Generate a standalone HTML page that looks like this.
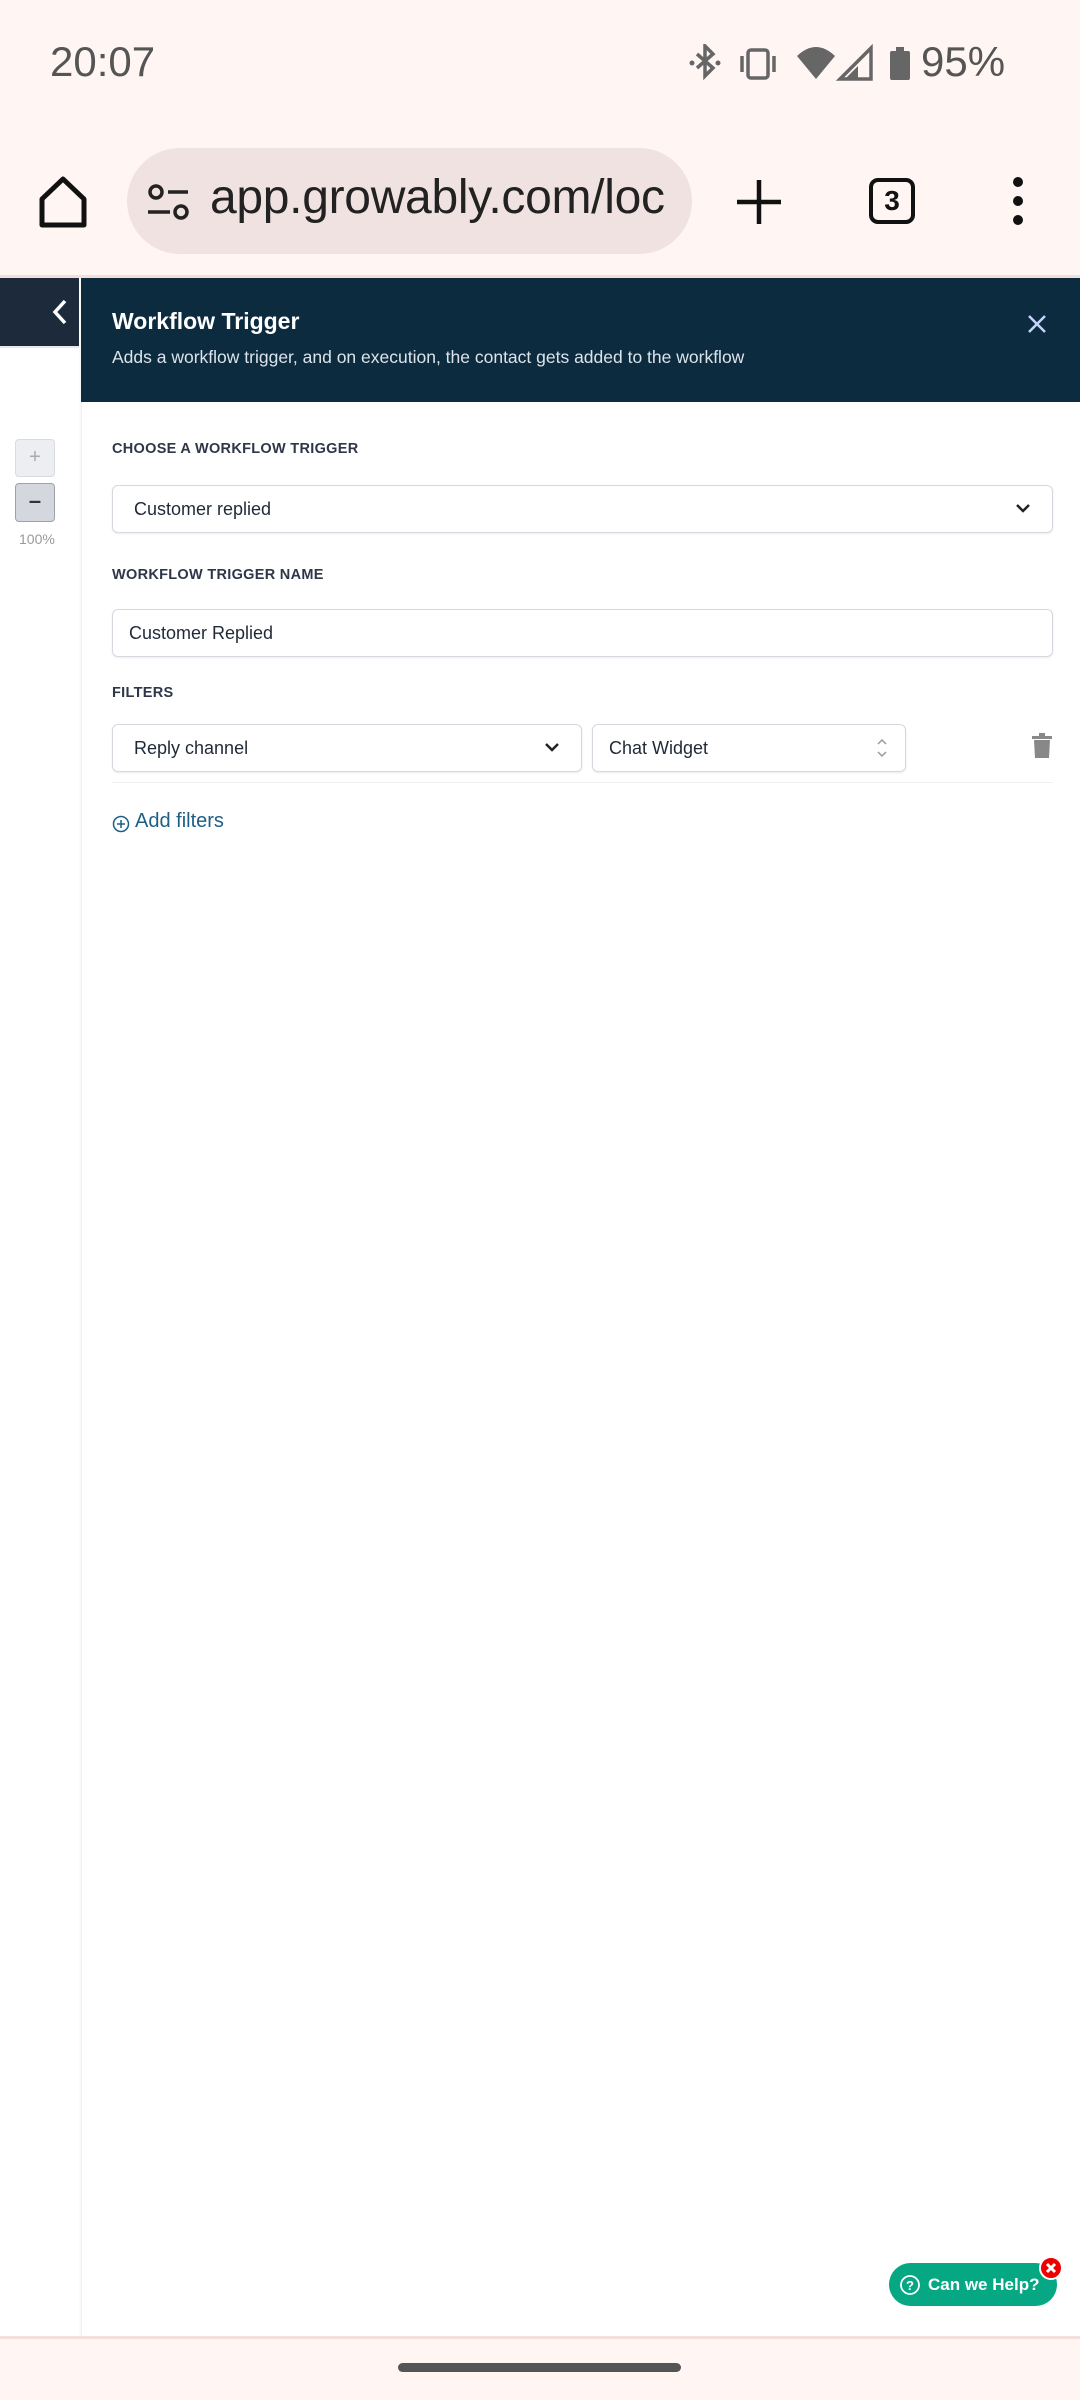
<!DOCTYPE html>
<html><head><meta charset="utf-8"><style>
*{margin:0;padding:0;box-sizing:border-box}
body{width:1080px;height:2400px;position:relative;overflow:hidden;background:#fff;font-family:"Liberation Sans",sans-serif}
.abs{position:absolute}
.lbl{position:absolute;left:112px;font-size:14.5px;font-weight:bold;color:#2d3748;letter-spacing:0.3px}
.box{position:absolute;border:1.5px solid #d5d9df;border-radius:6px;background:#fff;box-shadow:0 1px 2px rgba(0,0,0,0.08);font-size:18px;color:#1f2937;display:flex;align-items:center}
</style></head><body>
<div class="abs" style="left:0;top:0;width:1080px;height:277px;background:#fff6f4"></div>
<div class="abs" style="left:50px;top:38px;font-size:42px;color:#555">20:07</div>
<svg class="abs" style="left:685px;top:44px" width="330" height="40" viewBox="685 44 330 40">
<g fill="none" stroke="#666" stroke-width="3.5"><path d="M697 54 L713 68 L705 76 L705 46 L713 54 L697 68"/></g>
<circle cx="692" cy="63" r="2.5" fill="#666"/><circle cx="718" cy="63" r="2.5" fill="#666"/>
<rect x="748" y="50" width="20" height="28" rx="3" fill="none" stroke="#666" stroke-width="3.5"/>
<path d="M742 56v16M774 56v16" stroke="#666" stroke-width="3.5"/>
<path d="M797 56 Q816 38 835 56 L816 79 Z" fill="#666"/>
<path d="M840 79 L871 48 L871 79 Z" fill="none" stroke="#666" stroke-width="3.5"/>
<path d="M845 79 L858 66 L858 79Z" fill="#666"/>
<rect x="890" y="51" width="20" height="29" rx="2" fill="#666"/><rect x="896" y="47" width="8" height="5" fill="#666"/>
</svg>
<div class="abs" style="left:921px;top:38px;font-size:42px;color:#555">95%</div>
<svg class="abs" style="left:36px;top:175px" width="54" height="54" viewBox="0 0 54 54"><path d="M6 24 L27 4 L48 24 V50 H6 Z" fill="none" stroke="#111" stroke-width="5" stroke-linejoin="round"/></svg>
<div class="abs" style="left:127px;top:148px;width:565px;height:106px;border-radius:53px;background:#f1e2e2"></div>
<svg class="abs" style="left:146px;top:183px" width="45" height="38" viewBox="0 0 45 38"><circle cx="10" cy="9" r="6" fill="none" stroke="#222" stroke-width="3.5"/><path d="M22 9H42M2 29H24" stroke="#222" stroke-width="3.5"/><circle cx="35" cy="29" r="6" fill="none" stroke="#222" stroke-width="3.5"/></svg>
<div class="abs" style="left:210px;top:170px;width:462px;overflow:hidden;white-space:nowrap;font-size:48px;color:#222;letter-spacing:-0.3px">app.growably.com/loc</div>
<svg class="abs" style="left:735px;top:178px" width="48" height="48"><path d="M24 2V46M2 24H46" stroke="#111" stroke-width="4.5"/></svg>
<div class="abs" style="left:869px;top:178px;width:46px;height:46px;border:4.5px solid #111;border-radius:9px;font-size:28px;font-weight:bold;text-align:center;line-height:37px;color:#111">3</div>
<svg class="abs" style="left:1006px;top:175px" width="24" height="52"><circle cx="12" cy="7" r="5" fill="#111"/><circle cx="12" cy="26" r="5" fill="#111"/><circle cx="12" cy="45" r="5" fill="#111"/></svg>
<div class="abs" style="left:0;top:275px;width:1080px;height:3px;background:#f2dedb"></div>

<div class="abs" style="left:0;top:278px;width:81px;height:68px;background:#1d2a3c"></div>
<svg class="abs" style="left:50px;top:298px" width="20" height="28"><path d="M15 3 L5 14 L15 25" fill="none" stroke="#fff" stroke-width="3.5"/></svg>
<div class="abs" style="left:0;top:346px;width:81px;height:2px;background:#e5e7eb"></div>
<div class="abs" style="left:0;top:348px;width:81px;height:1988px;background:#fff"></div>
<div class="abs" style="left:79px;top:278px;width:3px;height:2058px;background:linear-gradient(to right,#fff,#f0f0f0)"></div>
<div class="abs" style="left:15px;top:439px;width:40px;height:38px;border:1.5px solid #d8dbe0;border-radius:4px;background:#eceef1;color:#aaa;font-size:20px;text-align:center;line-height:34px">+</div>
<div class="abs" style="left:15px;top:483px;width:40px;height:39px;border:1.5px solid #9aa3ad;border-radius:4px;background:#d4d8de;color:#333;font-size:22px;font-weight:bold;text-align:center;line-height:34px">–</div>
<div class="abs" style="left:19px;top:531px;font-size:14px;color:#999">100%</div>

<div class="abs" style="left:81px;top:278px;width:999px;height:124px;background:#0c2b3f"></div>
<div class="abs" style="left:112px;top:308px;font-size:23px;font-weight:bold;color:#fff">Workflow Trigger</div>
<div class="abs" style="left:112px;top:347px;font-size:17.5px;color:#dce3ea">Adds a workflow trigger, and on execution, the contact gets added to the workflow</div>
<svg class="abs" style="left:1027px;top:314px" width="20" height="20"><path d="M2 2L18 18M18 2L2 18" stroke="#c7d2fe" stroke-width="2.5"/></svg>

<div class="lbl" style="top:441px">CHOOSE A WORKFLOW TRIGGER</div>
<div class="box" style="left:112px;top:485px;width:941px;height:48px;padding-left:21px">Customer replied</div>
<svg class="abs" style="left:1015px;top:501px" width="16" height="14"><path d="M2 4L8 10L14 4" fill="none" stroke="#222" stroke-width="2.5"/></svg>
<div class="lbl" style="top:567px">WORKFLOW TRIGGER NAME</div>
<div class="box" style="left:112px;top:609px;width:941px;height:48px;padding-left:16px">Customer Replied</div>
<div class="lbl" style="top:685px">FILTERS</div>
<div class="box" style="left:112px;top:724px;width:470px;height:48px;padding-left:21px">Reply channel</div>
<svg class="abs" style="left:544px;top:740px" width="16" height="14"><path d="M2 4L8 10L14 4" fill="none" stroke="#222" stroke-width="2.5"/></svg>
<div class="box" style="left:592px;top:724px;width:314px;height:48px;padding-left:16px">Chat Widget</div>
<svg class="abs" style="left:875px;top:737px" width="14" height="22"><path d="M3 7L7 3L11 7M3 15L7 19L11 15" fill="none" stroke="#999" stroke-width="1.5"/></svg>
<svg class="abs" style="left:1031px;top:733px" width="22" height="26"><rect x="1" y="3" width="20" height="3" fill="#888"/><rect x="8" y="0" width="6" height="3" fill="#888"/><path d="M3 7H19L18 25H4Z" fill="#888"/></svg>
<div class="abs" style="left:112px;top:782px;width:941px;height:1px;background:#eef0f2"></div>
<svg class="abs" style="left:112px;top:815px" width="18" height="18"><circle cx="9" cy="9" r="7.5" fill="none" stroke="#1d5f86" stroke-width="1.5"/><path d="M9 5V13M5 9H13" stroke="#1d5f86" stroke-width="1.5"/></svg>
<div class="abs" style="left:135px;top:810px;font-size:20px;color:#1d5f86">Add filters</div>

<div class="abs" style="left:889px;top:2263px;width:168px;height:43px;border-radius:22px;background:#06a884;color:#fff;font-weight:bold;font-size:17px;line-height:43px;padding-left:39px">Can we Help?</div>
<svg class="abs" style="left:899px;top:2274px" width="22" height="22"><circle cx="11" cy="11" r="9" fill="none" stroke="#fff" stroke-width="1.8"/><text x="11" y="16" font-size="13" font-weight="bold" fill="#fff" text-anchor="middle" font-family="Liberation Sans">?</text></svg>
<svg class="abs" style="left:1039px;top:2256px" width="24" height="24"><circle cx="12" cy="12" r="11" fill="#e00" stroke="#fff" stroke-width="2"/><path d="M8 8L16 16M16 8L8 16" stroke="#fff" stroke-width="3"/></svg>

<div class="abs" style="left:0;top:2336px;width:1080px;height:64px;background:#fff6f4;border-top:3px solid #f3dfdb"></div>
<div class="abs" style="left:398px;top:2363px;width:283px;height:9px;border-radius:5px;background:#555"></div>
</body></html>
